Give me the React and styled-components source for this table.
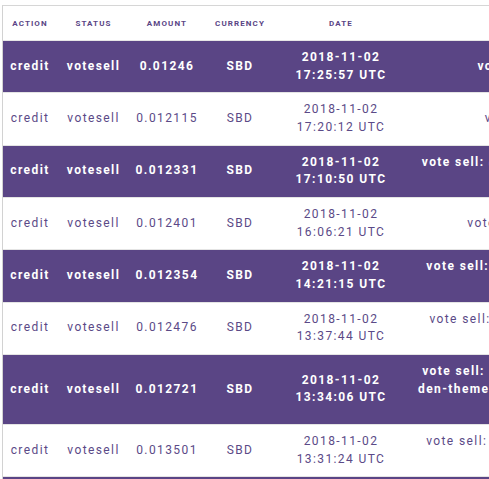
import React from 'react'
import styled, { createGlobalStyle } from 'styled-components'

const GlobalStyle = createGlobalStyle`
  html, body {
    margin: 0;
    padding: 0;
    background: #fff;
    overflow: hidden;
  }
  body {
    font-family: Roboto, "Liberation Sans", sans-serif;
  }
`

const PURPLE = '#5a4585'

const rows = [
  { amount: '0.01246', date: '2018-11-02', time: '17:25:57 UTC', memo: ['vote sell: @ace108/sbd'] },
  { amount: '0.012115', date: '2018-11-02', time: '17:20:12 UTC', memo: ['vote sell: @d00k13/w'] },
  { amount: '0.012331', date: '2018-11-02', time: '17:10:50 UTC', memo: ['vote sell: @steemitboard/steemitboard-', 'notify-2018'] },
  { amount: '0.012401', date: '2018-11-02', time: '16:06:21 UTC', memo: ['vote sell: @tipu/curation-1'] },
  { amount: '0.012354', date: '2018-11-02', time: '14:21:15 UTC', memo: ['vote sell: @bitcoinflood/re-steemit-ph', 'oto-2018'] },
  { amount: '0.012476', date: '2018-11-02', time: '13:37:44 UTC', memo: ['vote sell: @ace108/ace108-daily-upda', 'te-2018'] },
  { amount: '0.012721', date: '2018-11-02', time: '13:34:06 UTC', memo: ['vote sell: @steemgarden/re-the-steemg', 'den-theme-challenge-week-no-14-sunflo', 'wers'] },
  { amount: '0.013501', date: '2018-11-02', time: '13:31:24 UTC', memo: ['vote sell: @steemitboard/steemitboard', '-notify-11'] },
  { amount: '0.012988', date: '2018-11-02', time: '13:02:47 UTC', memo: ['vote sell: @ace108/sbd-2'] },
]

function History() {
  return (
    <Frame>
      <Table>
        <colgroup>
          <col style={{ width: 54 }} />
          <col style={{ width: 73 }} />
          <col style={{ width: 74 }} />
          <col style={{ width: 72 }} />
          <col style={{ width: 130 }} />
          <col style={{ width: 300 }} />
        </colgroup>
        <thead>
          <tr>
            <Head>Action</Head>
            <Head>Status</Head>
            <Head>Amount</Head>
            <Head>Currency</Head>
            <Head>Date</Head>
            <Head></Head>
          </tr>
        </thead>
        <tbody>
          {rows.map((item, i) => (
            <Row key={i} $dark={i % 2 === 0}>
              <Cell>credit</Cell>
              <Cell>votesell</Cell>
              <Cell>{item.amount}</Cell>
              <Cell>SBD</Cell>
              <Cell>
                {item.date}
                <br />
                {item.time}
              </Cell>
              <Cell>
                {item.memo.map((line, j) => (
                  <Line key={j}>{line}</Line>
                ))}
              </Cell>
            </Row>
          ))}
        </tbody>
      </Table>
    </Frame>
  )
}

export default function App() {
  return (
    <>
      <GlobalStyle />
      <History />
    </>
  )
}

const Frame = styled.div`
  margin: 5px 0 0 2px;
  border-left: 1px solid #d2d2d2;
  border-top: 1px solid #d6d6d6;
  width: 1000px;
  overflow: hidden;
`

const Table = styled.table`
  border-collapse: collapse;
  table-layout: fixed;
  width: 703px;
`

const Head = styled.th`
  height: 34px;
  padding: 0;
  text-align: center;
  font-size: 8px;
  font-weight: 700;
  letter-spacing: 1.1px;
  text-transform: uppercase;
  color: ${PURPLE};
  border-bottom: 1px solid #e6e6e6;
`

const Row = styled.tr`
  background: ${(p) => (p.$dark ? PURPLE : '#fff')};
  color: ${(p) => (p.$dark ? '#fff' : '#5b4a87')};
  font-weight: ${(p) => (p.$dark ? 700 : 400)};
  border-bottom: 1px solid #e4e4e4;
`

const Cell = styled.td`
  padding: 8px 0;
  text-align: center;
  font-size: 12px;
  line-height: 17.65px;
  letter-spacing: 1.4px;
  white-space: nowrap;
  overflow: hidden;
`

const Line = styled.div`
  white-space: nowrap;
`
